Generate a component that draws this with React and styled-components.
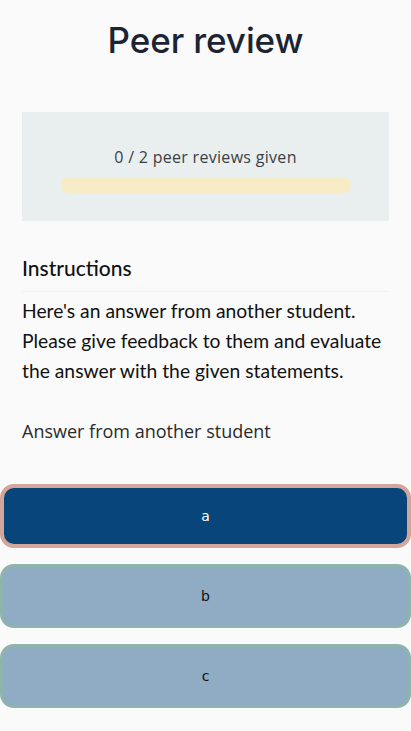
import React from "react";
import styled, { createGlobalStyle } from "styled-components";

const GlobalStyle = createGlobalStyle`
  html, body {
    margin: 0;
    padding: 0;
    background: #fafafa;
  }
  * { box-sizing: border-box; }
`;

const Page = styled.div`
  display: flex;
  flex-direction: column;
  min-height: 731px;
  background: #fafafa;
`;

const Title = styled.h1`
  margin: 18px 0 0;
  font-family: Inter, "Open Sans", sans-serif;
  font-weight: 500;
  font-size: 35px;
  line-height: 44px;
  letter-spacing: -0.1px;
  color: #1c2434;
  text-align: center;
`;

const Progress = styled.section`
  margin: 50px 22px 0;
  height: 109px;
  background: #e9eeee;
  display: flex;
  flex-direction: column;
  align-items: center;
  padding-top: 35px;
  gap: 9px;
`;

const ProgressText = styled.div`
  font-family: "Open Sans", sans-serif;
  font-size: 16px;
  line-height: 21px;
  letter-spacing: 0.3px;
  color: #3b3f45;
`;

const Track = styled.div`
  width: 290px;
  height: 16px;
  border-radius: 8px;
  background: #f6edc6;
`;

const Instructions = styled.section`
  margin: 34px 22px 0;
`;

const Heading = styled.h2`
  margin: 0;
  padding-bottom: 10px;
  border-bottom: 1px solid #f1f1f1;
  font-family: Lato, sans-serif;
  font-weight: 500;
  font-size: 21px;
  line-height: 26px;
  color: #111;
`;

const Body = styled.p`
  margin: 4px 0 0;
  font-family: Lato, sans-serif;
  font-size: 19.3px;
  line-height: 30px;
  color: #111;
`;

const AnswerLabel = styled.div`
  margin: 33px 0 0;
  font-family: "Open Sans", sans-serif;
  font-weight: 400;
  font-size: 18px;
  line-height: 24px;
  color: #2a2a2a;
`;

const Options = styled.div`
  display: flex;
  flex-direction: column;
  gap: 16px;
  margin-top: 41px;
`;

const Option = styled.button`
  width: 100%;
  height: 64px;
  border-radius: 14px;
  border: ${p => (p.$selected ? "4px" : "3px")} solid
    ${p => (p.$selected ? "#d4a59a" : "#8fb4ac")};
  background: ${p => (p.$selected ? "#08457a" : "#90abc4")};
  color: ${p => (p.$selected ? "#fff" : "#111")};
  font-family: "DejaVu Sans", sans-serif;
  font-size: 14px;
  cursor: pointer;
`;

export default function App() {
  return (
    <Page>
      <GlobalStyle />
      <Title>Peer review</Title>
      <Progress>
        <ProgressText>0 / 2 peer reviews given</ProgressText>
        <Track />
      </Progress>
      <Instructions>
        <Heading>Instructions</Heading>
        <Body>
          Here's an answer from another student. Please give feedback to them
          and evaluate the answer with the given statements.
        </Body>
        <AnswerLabel>Answer from another student</AnswerLabel>
      </Instructions>
      <Options>
        <Option $selected>a</Option>
        <Option>b</Option>
        <Option>c</Option>
      </Options>
    </Page>
  );
}
